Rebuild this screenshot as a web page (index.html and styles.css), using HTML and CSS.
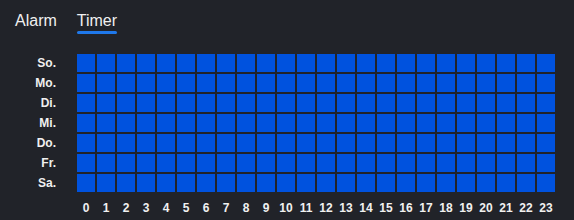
FILE: index.html
```html
<!DOCTYPE html>
<html lang="de">
<head>
    <meta charset="UTF-8">
    <title>Timer</title>
    <link rel="stylesheet" href="styles.css">
</head>
<body>
    <div class="tabs">
        <div class="tab">Alarm</div>
        <div class="tab active">Timer</div>
    </div>

    <div class="schedule" id="schedule"></div>

    <script>
        const days = ['So.', 'Mo.', 'Di.', 'Mi.', 'Do.', 'Fr.', 'Sa.'];
        const schedule = document.getElementById('schedule');

        days.forEach(day => {
            const row = document.createElement('div');
            row.className = 'row';
            let cells = '';
            for (let h = 0; h < 24; h++) {
                cells += '<div class="cell on"></div>';
            }
            row.innerHTML = `<span class="day">${day}</span><div class="cells">${cells}</div>`;
            schedule.appendChild(row);
        });

        // hour labels under the grid
        const hours = document.createElement('div');
        hours.className = 'row hours-row';
        let labels = '';
        for (let h = 0; h < 24; h++) {
            labels += `<span class="hour">${h}</span>`;
        }
        hours.innerHTML = `<span class="day"></span><div class="cells">${labels}</div>`;
        schedule.appendChild(hours);
    </script>
</body>
</html>
```

FILE: styles.css
```css
:root {
    --bg: #212329;
    --text: #f0f0f0;
    --accent: #1f78ea;
    --cell-on: #0052de;
}

* {
    margin: 0;
    padding: 0;
    box-sizing: border-box;
}

body {
    background-color: var(--bg);
    color: var(--text);
    font-family: "Liberation Sans", Arial, sans-serif;
    width: 574px;
    height: 220px;
    overflow: hidden;
}

.tabs {
    display: flex;
    gap: 20px;
    padding: 11px 0 0 15px;
}

.tab {
    font-size: 16px;
    line-height: 20px;
    padding-bottom: 3px;
    position: relative;
    cursor: pointer;
}

.tab.active::after {
    content: "";
    position: absolute;
    left: 0;
    right: 0;
    bottom: 0;
    height: 3px;
    border-radius: 2px;
    background: var(--accent);
}

.schedule {
    margin-top: 20px;
    display: flex;
    flex-direction: column;
    gap: 2px;
}

.row {
    display: flex;
    align-items: center;
}

.day {
    width: 56px;
    margin-right: 21px;
    text-align: right;
    font-size: 12px;
    font-weight: bold;
}

.cells {
    display: grid;
    grid-template-columns: repeat(24, 18px);
    gap: 2px;
}

.cell {
    height: 18px;
    background: #3a3d44;
}

.cell.on {
    background: var(--cell-on);
}

.hours-row {
    margin-top: 6px;
}

.hour {
    font-size: 12px;
    font-weight: bold;
    line-height: 16px;
    text-align: center;
}
```
